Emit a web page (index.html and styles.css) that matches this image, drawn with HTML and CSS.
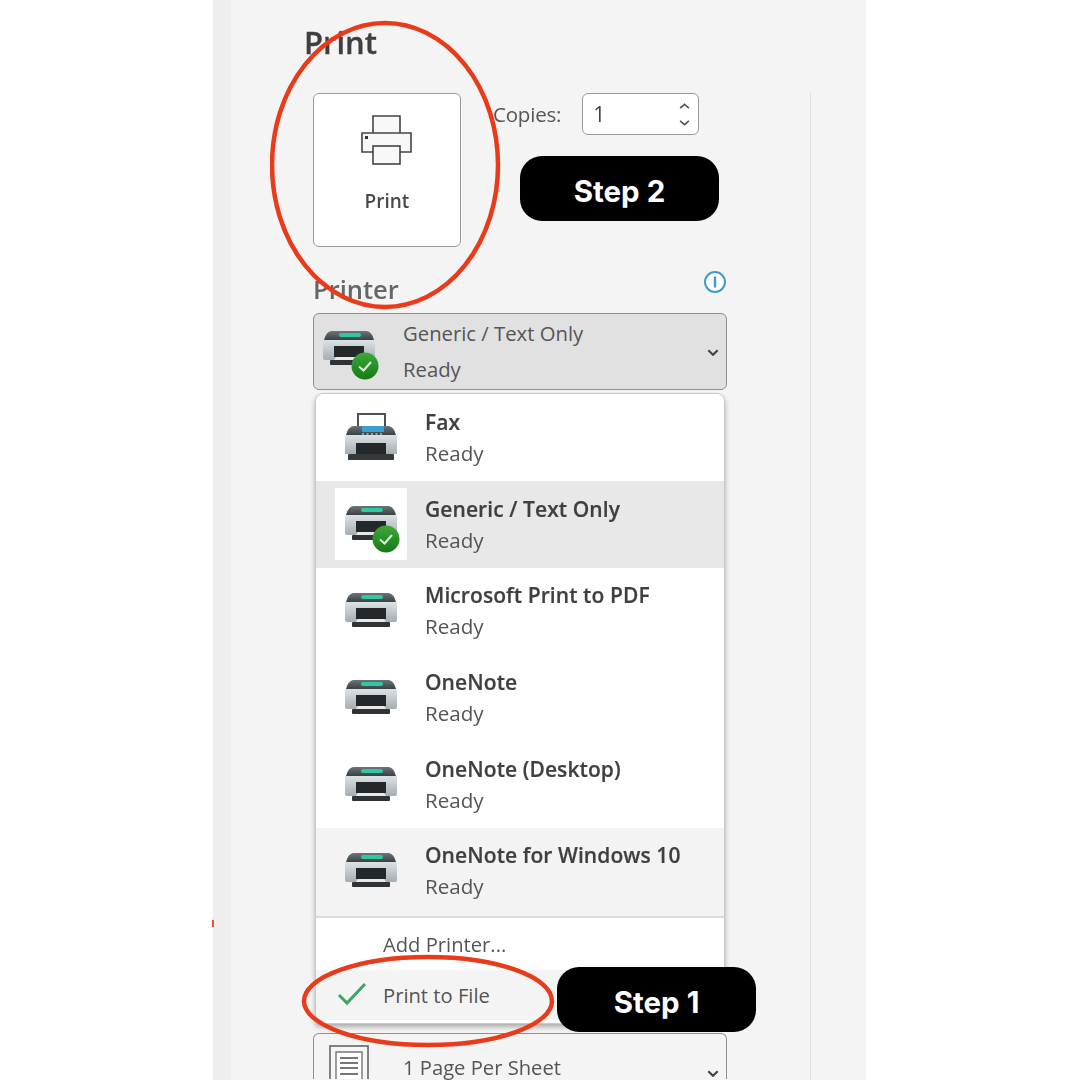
FILE: index.html
```html
<!DOCTYPE html>
<html lang="en">
<head>
<meta charset="utf-8">
<title>Print</title>
<link rel="stylesheet" href="styles.css">
</head>
<body>
<svg class="defs" width="0" height="0" aria-hidden="true">
  <defs>
    <linearGradient id="body" x1="0" y1="0" x2="0" y2="1"><stop offset="0" stop-color="#dde2e5"/><stop offset="1" stop-color="#a5adb2"/></linearGradient>
    <linearGradient id="cap" x1="0" y1="0" x2="0" y2="1"><stop offset="0" stop-color="#6d757a"/><stop offset="1" stop-color="#3a4145"/></linearGradient>
    <linearGradient id="ok" x1="0" y1="0" x2="0" y2="1"><stop offset="0" stop-color="#3ea83a"/><stop offset="1" stop-color="#147a18"/></linearGradient>
    <symbol id="printer" viewBox="0 0 52 36">
      <path d="M1 9 Q3 1 8 0 H44 Q49 1 51 9Z" fill="url(#cap)"/>
      <rect x="16" y="2" width="22" height="4" rx="2" fill="#2fc8a0"/>
      <path d="M0 9 H52 V27 Q52 29 50 29 H2 Q0 29 0 27Z" fill="url(#body)"/>
      <rect x="11" y="15" width="30" height="11" fill="#24282b"/>
      <path d="M13 26 H39 L41 29 H11Z" fill="#e8e8e8"/>
      <rect x="7" y="29" width="38" height="5" rx="1" fill="#2f3336"/>
    </symbol>
    <symbol id="fax" viewBox="0 0 52 48">
      <path d="M13 14 V1 H40 V14Z" fill="#fff" stroke="#4b5359" stroke-width="2"/>
      <path d="M1 22 Q3 14 8 13 H44 Q49 14 51 22Z" fill="url(#cap)"/>
      <rect x="17" y="13" width="22" height="6" fill="#3a9fd0"/>
      <path d="M17 21 H39" stroke="#9cc7dc" stroke-width="1.4" stroke-dasharray="2 2.5"/>
      <path d="M0 22 H52 V41 H0Z" fill="url(#body)"/>
      <rect x="11" y="30" width="30" height="11" fill="#24282b"/>
      <rect x="3" y="41" width="46" height="6" rx="1" fill="#34393d"/>
    </symbol>
    <symbol id="check-badge" viewBox="0 0 28 28">
      <circle cx="14" cy="14" r="13.5" fill="url(#ok)"/>
      <path d="M8 14.5 L12.5 18.5 L20 10" fill="none" stroke="#d8f0d4" stroke-width="2"/>
    </symbol>
  </defs>
</svg>

<main class="panel">
  <div class="column">
    <h1 class="title">Print</h1>

    <div class="print-row">
      <button class="print-button">
        <svg class="print-icon" viewBox="0 0 52 52" aria-hidden="true">
          <path d="M12 18 V1 H39 V18 M12 37 H1 V18 H50 V37 H39" fill="#f8f8f8" stroke="#444" stroke-width="1.6"/>
          <rect x="12" y="31" width="27" height="18" fill="#f8f8f8" stroke="#444" stroke-width="1.6"/>
          <rect x="4" y="21" width="3" height="3" fill="#333"/>
        </svg>
        <span class="print-label">Print</span>
      </button>
      <div class="copies">
        <span class="copies-label">Copies:</span>
        <div class="spinner">
          <span>1</span>
          <span class="spin-arrows">
            <svg viewBox="0 0 10 5" class="spin-arrow"><path d="M1 4.5 L5 1 L9 4.5" /></svg>
            <svg viewBox="0 0 10 5" class="spin-arrow"><path d="M1 .5 L5 4 L9 .5" /></svg>
          </span>
        </div>
      </div>
    </div>

    <div class="printer-head">
      <h2 class="subtitle">Printer</h2>
      <svg class="info" viewBox="0 0 24 24" aria-hidden="true">
        <circle cx="12" cy="12" r="10" fill="#fff" stroke="#3f9ad0" stroke-width="2"/>
        <rect x="10.8" y="6.5" width="2.4" height="11" fill="#3f9ad0"/>
      </svg>
    </div>

    <div class="select select-open">
      <span class="select-icon">
        <svg class="printer-img"><use href="#printer"/></svg>
        <svg class="badge"><use href="#check-badge"/></svg>
      </span>
      <span class="select-text"><span>Generic / Text Only</span><span>Ready</span></span>
      <svg class="chevron" viewBox="0 0 10 6"><path d="M1 1 L5 5 L9 1"/></svg>
    </div>

    <div class="menu">
      <div class="item">
        <span class="item-icon"><svg class="fax-img"><use href="#fax"/></svg></span>
        <span class="item-text"><b>Fax</b><span>Ready</span></span>
      </div>
      <div class="item item-selected">
        <span class="item-icon item-icon-white">
          <svg class="printer-img"><use href="#printer"/></svg>
          <svg class="badge"><use href="#check-badge"/></svg>
        </span>
        <span class="item-text"><b>Generic / Text Only</b><span>Ready</span></span>
      </div>
      <div class="item">
        <span class="item-icon"><svg class="printer-img"><use href="#printer"/></svg></span>
        <span class="item-text"><b>Microsoft Print to PDF</b><span>Ready</span></span>
      </div>
      <div class="item">
        <span class="item-icon"><svg class="printer-img"><use href="#printer"/></svg></span>
        <span class="item-text"><b>OneNote</b><span>Ready</span></span>
      </div>
      <div class="item">
        <span class="item-icon"><svg class="printer-img"><use href="#printer"/></svg></span>
        <span class="item-text"><b>OneNote (Desktop)</b><span>Ready</span></span>
      </div>
      <div class="item item-hover">
        <span class="item-icon"><svg class="printer-img"><use href="#printer"/></svg></span>
        <span class="item-text"><b>OneNote for Windows 10</b><span>Ready</span></span>
      </div>
      <div class="action action-add">Add Printer...</div>
      <div class="action action-file">
        <svg class="tick" viewBox="0 0 30 24"><path d="M2 13 L10 21 L28 2"/></svg>
        Print to File
      </div>
    </div>

    <div class="select select-pages">
      <svg class="page-icon" viewBox="0 0 40 34" aria-hidden="true">
        <rect x="1" y="1" width="38" height="50" fill="#f6f6f6" stroke="#666" stroke-width="1.6"/>
        <path d="M7 7 H33 V50 H7Z" fill="#fff" stroke="#777" stroke-width="1.4"/>
        <path d="M11 13 H29 M11 18 H29 M11 23 H29 M11 29 H29" fill="none" stroke="#777" stroke-width="1.8"/>
      </svg>
      <span class="pages-text">1 Page Per Sheet</span>
      <svg class="chevron" viewBox="0 0 10 6"><path d="M1 1 L5 5 L9 1"/></svg>
    </div>
  </div>

  <svg class="ring ring-print" viewBox="0 0 232 290" aria-hidden="true">
    <ellipse cx="115" cy="145" rx="113" ry="142" />
  </svg>
  <svg class="ring ring-file" viewBox="0 0 254 98" aria-hidden="true">
    <ellipse cx="127" cy="49" rx="124" ry="44" />
  </svg>
  <div class="step step-2">Step 2</div>
  <div class="step step-1">Step 1</div>
</main>
<i class="speck"></i>
</body>
</html>
```
FILE: styles.css
```css
* { box-sizing: border-box; }
html, body { margin: 0; height: 1080px; overflow: hidden; background: #fff; }
body { font-family: "Open Sans", "Noto Sans", sans-serif; color: #444; position: relative; }
.defs { position: absolute; }

.panel {
  position: relative;
  margin-left: 213px;
  width: 653px;
  height: 1080px;
  background: #f4f4f4;
  border-left: 18px solid #eeeeee;
  overflow: hidden;
}
.column {
  position: relative;
  width: 580px;
  height: 1080px;
  padding: 93px 82px 0;
  filter: blur(.45px);
}
.column::after {
  content: "";
  position: absolute;
  top: 92px; bottom: 0; right: 0;
  width: 1px;
  background: #dfdfdf;
}
.title {
  position: absolute;
  left: 73px; top: 20px;
  margin: 0;
  font-size: 31px;
  line-height: 44px;
  font-weight: 600;
  color: #3f3f3f;
  -webkit-text-stroke: .3px #3f3f3f;
}

.print-row { display: flex; gap: 32px; height: 154px; }
.print-button {
  display: flex;
  flex-direction: column;
  align-items: center;
  width: 148px;
  height: 154px;
  padding: 21px 0 0;
  background: #fff;
  border: 1px solid #9a9a9a;
  border-radius: 6px;
  font: inherit;
  color: inherit;
}
.print-icon { width: 52px; height: 52px; }
.print-label { margin-top: 20px; font-size: 19px; line-height: 28px; font-weight: 600; color: #4a4a4a; }
.copies { display: flex; align-items: center; gap: 21px; height: 42px; }
.copies-label { font-size: 20.5px; color: #555; letter-spacing: -.2px; }
.spinner {
  display: flex;
  justify-content: space-between;
  align-items: center;
  width: 117px;
  height: 42px;
  padding: 0 8px 0 10px;
  background: #fff;
  border: 1px solid #999;
  border-radius: 6px;
  font-size: 21px;
  color: #444;
}
.spin-arrows { display: flex; flex-direction: column; gap: 11px; }
.spin-arrow { display: block; width: 11px; height: 6px; fill: none; stroke: #555; stroke-width: 1.5; }

.printer-head {
  display: flex;
  justify-content: space-between;
  align-items: flex-start;
  width: 414px;
  height: 45px;
  margin-top: 21px;
  padding: 4px 0 0;
}
.subtitle { margin: -1px 0 0; font-size: 25.5px; line-height: 36px; font-weight: 600; color: #666; }
.info { width: 24px; height: 24px; margin-top: -2px; }

.select {
  position: relative;
  display: flex;
  align-items: center;
  width: 414px;
  border: 1px solid #8f8f8f;
  border-radius: 6px;
}
.select-open { height: 77px; background: #e1e1e1; }
.select-icon { position: relative; width: 80px; height: 52px; margin-left: 9px; flex: none; }
.select-icon .printer-img { position: absolute; left: 0; top: 5px; }
.select-icon .badge { left: 28px; top: 26px; }
.select-text {
  display: flex; flex-direction: column;
  gap: 8px;
  margin-top: -2px;
  font-size: 20.3px;
  line-height: 28px;
  color: #555;
}
.chevron { position: absolute; right: 7px; top: 50%; width: 12px; height: 7px; margin-top: -3px; fill: none; stroke: #444; stroke-width: 1.8; }

.printer-img { width: 52px; height: 36px; }
.fax-img { width: 52px; height: 48px; }
.badge { position: absolute; width: 28px; height: 28px; }

.menu {
  width: 410px;
  height: 631px;
  margin: 3px 0 0 2px;
  background: #fff;
  border: 1px solid #c8c8c8;
  border-radius: 8px 8px 4px 4px;
  box-shadow: 0 3px 5px rgba(0,0,0,.3);
  overflow: hidden;
  display: flex;
  flex-direction: column;
}
.item { display: flex; align-items: center; height: 86.8px; flex: none; padding-left: 19px; }
.item-selected { background: #e8e8e8; }
.item-hover { background: #f3f3f3; height: 90px; padding-bottom: 2px; border-bottom: 2px solid #dcdcdc; }
.item-icon {
  position: relative;
  display: flex;
  align-items: center;
  justify-content: center;
  width: 72px;
  height: 72px;
  flex: none;
}
.item-icon-white { background: #fff; }
.item-icon .badge { right: 7px; bottom: 7px; }
.item-text { display: flex; flex-direction: column; margin: 1px 0 0 18px; font-size: 20.6px; line-height: 31px; color: #555; }
.item-text b { font-size: 21px; font-weight: 600; color: #3f3f3f; letter-spacing: .08px; -webkit-text-stroke: .2px #3f3f3f; }

.action { display: flex; align-items: center; flex: none; padding-left: 67px; font-size: 20.2px; color: #555; }
.action-add { height: 52px; }
.action-file { position: relative; height: 50px; background: #f4f4f4; }
.tick { position: absolute; left: 21px; top: 12px; width: 30px; height: 24px; fill: none; stroke: #3fa464; stroke-width: 3; }

.select-pages { align-items: flex-start; height: 46px; margin-top: 9px; border-bottom: 0; border-radius: 6px 6px 0 0; }
.page-icon { width: 40px; height: 34px; margin: 11px 0 0 15px; flex: none; }
.pages-text { margin-left: 34px; margin-top: 22px; font-size: 20.2px; line-height: 22px; color: #555; }
.select-pages .chevron { top: 36px; margin-top: 0; }

.ring { position: absolute; fill: none; stroke: #e93a1a; stroke-width: 4.5; }
.ring-print { left: 39px; top: 20px; width: 232px; height: 290px; }
.ring-file { left: 70px; top: 952px; width: 254px; height: 98px; }

.step {
  position: absolute;
  display: flex;
  align-items: center;
  justify-content: center;
  height: 65px;
  padding-top: 4px;
  background: #000;
  border-radius: 22px;
  color: #fff;
  font-family: "Inter", "Open Sans", sans-serif;
  font-weight: 700;
  font-size: 29.5px;
}
.step-2 { left: 289px; top: 156px; width: 199px; }
.step-1 { left: 326px; top: 967px; width: 199px; }

.speck { position: absolute; left: 212px; top: 920px; width: 2px; height: 7px; background: #e8503a; }
```
